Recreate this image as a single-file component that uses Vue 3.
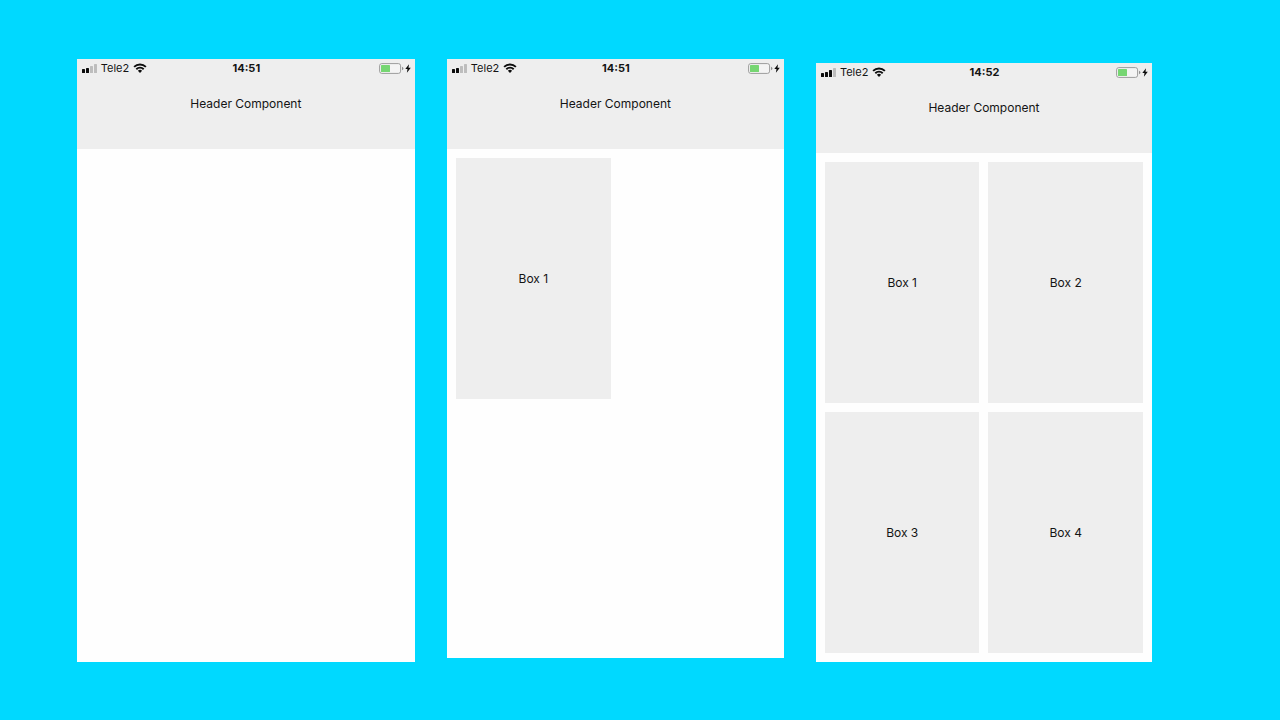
<script setup>
const phones = [
  { id: 'first', time: '14:51', signal: 2, boxes: [] },
  { id: 'second', time: '14:51', signal: 2, boxes: ['Box 1'] },
  { id: 'third', time: '14:52', signal: 3, boxes: ['Box 1', 'Box 2', 'Box 3', 'Box 4'] },
]
const bars = [
  { x: 0, y: 5, h: 4 },
  { x: 4, y: 4, h: 5 },
  { x: 8, y: 2, h: 7 },
  { x: 12, y: 0, h: 9 },
]
</script>

<template>
  <main class="stage">
    <section v-for="phone in phones" :key="phone.id" class="phone" :class="phone.id">
      <header class="header">
        <div class="status">
          <div class="carrier">
            <svg class="signal" viewBox="0 0 15 9" aria-hidden="true">
              <rect
                v-for="(bar, i) in bars"
                :key="i"
                :x="bar.x"
                :y="bar.y"
                width="3"
                :height="bar.h"
                rx="0.6"
                :fill="i < phone.signal ? '#0c0c0c' : '#bdbdbd'"
              />
            </svg>
            <span>Tele2</span>
            <svg class="wifi" viewBox="0 0 14 10" aria-hidden="true">
              <path d="M1.1 3.9a8.4 8.4 0 0 1 11.8 0" />
              <path d="M3.3 6.3a5.3 5.3 0 0 1 7.4 0" />
              <path class="dot" d="M4.9 7.8a3 3 0 0 1 4.2 0L7 10z" />
            </svg>
          </div>
          <time class="time">{{ phone.time }}</time>
          <div class="power">
            <svg class="battery" viewBox="0 0 25 11" aria-hidden="true">
              <rect x="0.6" y="0.6" width="21" height="9.8" rx="2.2" fill="#f4f4f4" stroke="#9c9c9c" />
              <rect x="2" y="2" width="9" height="7" rx="0.6" fill="#76d672" />
              <path d="M23 3.8q1.4 0.4 1.4 1.7t-1.4 1.7z" fill="#8e8e8e" />
            </svg>
            <svg class="bolt" viewBox="0 0 6 9" aria-hidden="true">
              <path d="M4 0.2L0.3 5h2.2L1.9 8.8L5.8 3.7H3.5z" fill="#0c0c0c" />
            </svg>
          </div>
        </div>
        <h1 class="title">Header Component</h1>
      </header>
      <div class="content">
        <div v-for="box in phone.boxes" :key="box" class="box">{{ box }}</div>
      </div>
    </section>
  </main>
</template>

<style>
body {
  background: #00d9ff;
}
</style>

<style scoped>
.stage {
  box-sizing: border-box;
  min-height: 100vh;
  padding: 59px 10% 58px 6%;
  display: grid;
  grid-template-columns: 338fr 337fr 336fr;
  gap: 32px;
  background: #00d9ff;
  color: #141414;
  font-family: Inter, "Liberation Sans", sans-serif;
  font-size: 12px;
  line-height: 16px;
}
.phone {
  display: flex;
  flex-direction: column;
  background: #fefefe;
}
.second {
  margin-bottom: 4px;
}
.third {
  margin-top: 4px;
}
.header {
  box-sizing: border-box;
  min-height: 90px;
  background: #eeeeee;
}
.status {
  display: grid;
  grid-template-columns: 1fr auto 1fr;
  align-items: center;
  height: 18px;
  padding: 0 4px 0 5px;
  font-size: 11px;
}
.carrier,
.power {
  display: flex;
  align-items: center;
}
.carrier {
  gap: 4px;
}
.power {
  justify-content: flex-end;
  gap: 1px;
}
.signal {
  width: 15px;
  height: 9px;
}
.wifi {
  width: 14px;
  height: 10px;
  fill: none;
  stroke: #0c0c0c;
  stroke-width: 1.9;
}
.wifi .dot {
  fill: #0c0c0c;
  stroke: none;
}
.battery {
  width: 25px;
  height: 11px;
}
.bolt {
  width: 6px;
  height: 9px;
}
.time {
  font-weight: 700;
}
.title {
  margin: 19px 0 0;
  font-size: 12px;
  font-weight: 400;
  text-align: center;
}
.content {
  flex: 1;
  display: grid;
  grid-template-columns: 1fr 1fr;
  grid-template-rows: 1fr 1fr;
  gap: 9px;
  padding: 9px;
}
.box {
  display: flex;
  align-items: center;
  justify-content: center;
  background: #eeeeee;
}
</style>
